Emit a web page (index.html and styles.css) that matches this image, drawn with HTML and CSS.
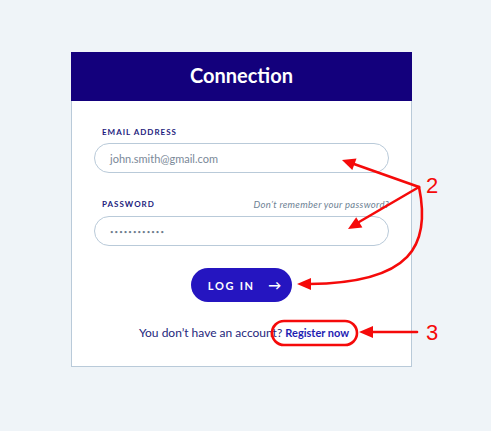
FILE: index.html
```html
<!DOCTYPE html>
<html lang="en">
<head>
	<meta charset="UTF-8">
	<meta name="viewport" content="width=device-width, initial-scale=1.0">
	<title>Connection</title>
	<link rel="stylesheet" href="styles.css">
</head>
<body>
	<div class="card">
		<div class="cardHeader">Connection</div>
		<form class="cardBody">
			<div class="labelRow">
				<label for="email">Email address</label>
			</div>
			<div class="field">
				<span class="placeholder">john.smith@gmail.com</span>
			</div>
			<div class="labelRow second">
				<label for="password">Password</label>
				<a class="forgot" href="#">Don’t remember your password?</a>
			</div>
			<div class="field pass">
				<span class="dots">••••••••••••</span>
			</div>
			<button class="login" type="button">Log in <span class="arrow">&#8594;</span></button>
			<p class="register">You don’t have an account? <a href="#">Register now</a></p>
		</form>
	</div>

	<!-- red notes drawn over the screenshot -->
	<svg class="notes" width="491" height="431" viewBox="0 0 491 431">
		<g stroke="#f50a0a" stroke-width="2.6" fill="none" stroke-linecap="round">
			<line x1="419" y1="187" x2="354" y2="164" />
			<line x1="419" y1="187" x2="359" y2="222" />
			<path d="M419 187 C431 245 412 283 309 284" />
			<line x1="371" y1="332" x2="417" y2="332" />
			<rect x="272" y="321" width="85" height="24" rx="12" />
		</g>
		<g fill="#f50a0a">
			<polygon points="342,160 356.5,158.6 352.3,170" />
			<polygon points="348,229 362.4,227.5 356.2,217.3" />
			<polygon points="297,284 311,278 311,290" />
			<polygon points="359,332 373,326 373,338" />
		</g>
		<text x="426" y="193" class="num">2</text>
		<text x="426" y="340" class="num">3</text>
	</svg>
</body>
</html>
```

FILE: styles.css
```css
body {
	margin: 0;
	background: #eff4f8;
	font-family: "Lato", "Open Sans", sans-serif;
	width: 491px;
	height: 431px;
	position: relative;
	overflow: hidden;
}

.card {
	margin: 52px 0 0 71px;
	width: 339px;
	background: #fff;
	border: 1px solid #b9cad9;
	border-top: none;
}

.cardHeader {
	height: 49px;
	line-height: 46px;
	background: #13007c;
	color: #fff;
	text-align: center;
	font-size: 20px;
	font-weight: 700;
	margin: 0 -1px;
}

.cardBody {
	display: flex;
	flex-direction: column;
	padding: 25px 22px 25px 22px;
	margin: 0;
}

.labelRow {
	display: flex;
	justify-content: space-between;
	align-items: center;
	height: 12px;
	padding: 0 0 0 8px;
	margin-bottom: 5px;
}
.labelRow.second { margin-top: 25px; margin-bottom: 6px; }

.labelRow label {
	font-size: 8px;
	font-weight: 700;
	letter-spacing: 1px;
	text-transform: uppercase;
	color: #1d1c7d;
}

.forgot {
	font-size: 9.5px;
	font-style: italic;
	letter-spacing: 0.3px;
	color: #6e8294;
	text-decoration: none;
}

.field {
	height: 28px;
	border: 1px solid #b9cad9;
	border-radius: 15px;
	display: flex;
	align-items: center;
	padding-left: 15px;
}

.placeholder {
	font-size: 11px;
	color: #7a8898;
}

.dots {
	font-size: 6px;
	letter-spacing: 1.1px;
	color: #6e7c8c;
}

.login {
	align-self: center;
	margin-top: 22px;
	width: 101px;
	height: 34px;
	border: none;
	border-radius: 17px;
	background: #2515c0;
	color: #fff;
	font-family: inherit;
	font-size: 11px;
	font-weight: 700;
	letter-spacing: 1.7px;
	text-transform: uppercase;
	padding: 0 0 0 6px;
	cursor: pointer;
}
.login .arrow {
	margin-left: 9px;
	font-size: 13px;
	letter-spacing: 0;
}

.register {
	margin: 23px 0 0 0;
	text-align: center;
	font-size: 12px;
	line-height: 16px;
	color: #25267c;
	padding-left: 5px;
}
.register a {
	color: #1e1db3;
	font-size: 11px;
	font-weight: 700;
	text-decoration: none;
}

.notes {
	position: absolute;
	left: 0;
	top: 0;
	pointer-events: none;
}
.num {
	font-family: "Liberation Sans", sans-serif;
	font-size: 22px;
	fill: #f50a0a;
}
```
